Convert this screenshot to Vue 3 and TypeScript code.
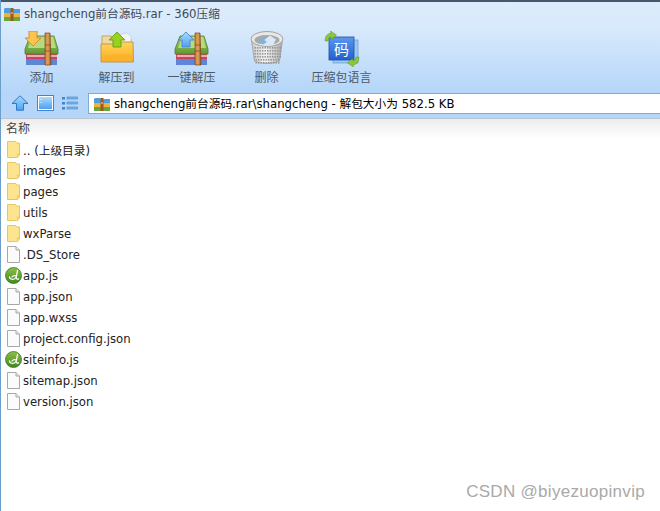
<!-- 360压缩 主窗口 -->
<script setup lang="ts">
type FileKind = 'folder' | 'doc' | 'js'

interface FileRow {
  name: string
  kind: FileKind
}

const rows: FileRow[] = [
  { name: '.. (上级目录)', kind: 'folder' },
  { name: 'images', kind: 'folder' },
  { name: 'pages', kind: 'folder' },
  { name: 'utils', kind: 'folder' },
  { name: 'wxParse', kind: 'folder' },
  { name: '.DS_Store', kind: 'doc' },
  { name: 'app.js', kind: 'js' },
  { name: 'app.json', kind: 'doc' },
  { name: 'app.wxss', kind: 'doc' },
  { name: 'project.config.json', kind: 'doc' },
  { name: 'siteinfo.js', kind: 'js' },
  { name: 'sitemap.json', kind: 'doc' },
  { name: 'version.json', kind: 'doc' },
]

const holes: { x: number; y: number }[] = []
for (let r = 0; r < 6; r++) {
  for (let c = 0; c < 11 - (r > 3 ? 1 : 0); c++) {
    holes.push({ x: 5.5 + c * 2.5 + (r > 3 ? 1 : 0), y: 16 + r * 3 })
  }
}
</script>

<template>
  <div class="win">
    <svg class="defs" width="0" height="0" aria-hidden="true">
      <defs>
        <linearGradient id="gGreen" x1="0" y1="0" x2="0" y2="1">
          <stop offset="0" stop-color="#a5cf6b" />
          <stop offset="1" stop-color="#5f9a35" />
        </linearGradient>
        <linearGradient id="gStrap" x1="0" y1="0" x2="1" y2="0">
          <stop offset="0" stop-color="#c9803a" />
          <stop offset="0.5" stop-color="#e2a25c" />
          <stop offset="1" stop-color="#9a5520" />
        </linearGradient>
        <linearGradient id="gFolder" x1="0" y1="0" x2="0" y2="1">
          <stop offset="0" stop-color="#ffd65a" />
          <stop offset="1" stop-color="#fbab1f" />
        </linearGradient>
        <linearGradient id="gBlueArrow" x1="0" y1="0" x2="0" y2="1">
          <stop offset="0" stop-color="#a8dcff" />
          <stop offset="1" stop-color="#4f9ff0" />
        </linearGradient>
        <linearGradient id="gMetal" x1="0" y1="0" x2="1" y2="0">
          <stop offset="0" stop-color="#c9c9c9" />
          <stop offset="0.45" stop-color="#f3f3f3" />
          <stop offset="1" stop-color="#a9a9a9" />
        </linearGradient>
        <linearGradient id="gCode" x1="0" y1="0" x2="0" y2="1">
          <stop offset="0" stop-color="#5c98ee" />
          <stop offset="1" stop-color="#2360cc" />
        </linearGradient>
        <linearGradient id="gJs" x1="0" y1="0" x2="0" y2="1">
          <stop offset="0" stop-color="#8cc04a" />
          <stop offset="1" stop-color="#3f8a1f" />
        </linearGradient>
        <symbol id="book" viewBox="0 0 36 34">
          <path d="M2 22h31v11H2z" fill="#3f6fc0" />
          <path d="M2 27h31v6H2z" fill="#5d86d8" />
          <path d="M2 21h31v6H2z" fill="#c9435f" />
          <path d="M3 23h30v2H3z" fill="#f0a8b4" />
          <path d="M6 4h24l4 13v5H1v-5z" fill="url(#gGreen)" stroke="#4f7f2c" stroke-width="0.8" />
          <path d="M8 5h21l3 11H4z" fill="#b6da80" />
          <path d="M21 1h5l1 32h-6z" fill="url(#gStrap)" stroke="#80451a" stroke-width="0.7" />
          <path d="M21 13h6M21 19h6" stroke="#80451a" stroke-width="0.7" />
        </symbol>
        <symbol id="arc-small" viewBox="0 0 16 14">
          <path d="M0 2l1-1h5l1 1h9v4H0z" fill="#4f9fe0" />
          <path d="M0 6h16v4H0z" fill="#f0b040" />
          <path d="M0 10h16v4H0z" fill="#68a83a" />
          <path d="M6.500 1h3v13h-3z" fill="#9a5a20" />
          <path d="M7.500 5h1v2h-1z" fill="#f3d9a0" />
        </symbol>
        <symbol id="ic-folder" viewBox="0 0 13 17">
          <path d="M.5.5h8l1 1.500h3v12l-2 2.500H.5z" fill="#fde58f" stroke="#e8c463" />
          <path d="M9.500 12.500h3l-2 4z" fill="#f2cd6b" />
        </symbol>
        <symbol id="ic-doc" viewBox="0 0 13 17">
          <path d="M.5.500h8.500l3.500 3.500v12.500H.5z" fill="#fbfbfb" stroke="#a8a8a8" />
          <path d="M9 .5v3.500h3.500" fill="#e8e8e8" stroke="#a8a8a8" />
        </symbol>
        <symbol id="ic-js" viewBox="0 0 17 17">
          <circle cx="8.500" cy="8.500" r="8" fill="url(#gJs)" stroke="#3a7a1c" stroke-width="0.800" />
          <path d="M12.500 3.500L11.500 9C11 12 8 13 6 12 5 11.500 4.500 10.500 4.500 10M7 10C8 8.500 10 8.500 11.500 9M11.200 10.500Q11.500 12.500 13.500 12" fill="none" stroke="#fff" stroke-width="1.300" stroke-linecap="round" />
        </symbol>
      </defs>
    </svg>

    <div class="titlebar">
      <svg class="title-icon" width="16" height="14"><use href="#arc-small" /></svg>
      <span class="title-text">shangcheng前台源码.rar - 360压缩</span>
    </div>

    <div class="toolbar">
      <div class="tool">
        <svg width="36" height="36" viewBox="0 0 36 36">
          <use href="#book" x="0" y="1" width="36" height="34" />
          <path d="M5 0h8v7h4l-8 8-8-8h4z" fill="#fbc44e" stroke="#d08a26" stroke-width="0.900" />
        </svg>
        <span>添加</span>
      </div>
      <div class="tool">
        <svg width="36" height="36" viewBox="0 0 36 36">
          <path d="M3 5h9l2 3h18v6H3z" fill="#efd9a0" stroke="#b99a58" stroke-width="0.800" />
          <path d="M14 5l14-3 4 3v12H14z" fill="#f4f4f4" stroke="#c8c8c8" stroke-width="0.700" />
          <path d="M2 13h12l2-2h18l.5 20H2z" fill="url(#gFolder)" stroke="#bb9a55" stroke-width="1" />
          <path d="M4 25q14-3 29-1v6H3z" fill="#fbb22b" />
          <path d="M18 1l8 8h-4v7h-8V9h-4z" fill="#9bd11e" stroke="#64a012" stroke-width="0.900" />
        </svg>
        <span>解压到</span>
      </div>
      <div class="tool">
        <svg width="36" height="36" viewBox="0 0 36 36">
          <use href="#book" x="0" y="1" width="36" height="34" />
          <path d="M12 1l8 8h-4v7H8V9H4z" fill="url(#gBlueArrow)" stroke="#4a86d0" stroke-width="0.900" />
        </svg>
        <span>一键解压</span>
      </div>
      <div class="tool">
        <svg width="36" height="36" viewBox="0 0 36 36">
          <path d="M2.500 9l3 21q12.500 5 25 0l3-21z" fill="url(#gMetal)" stroke="#9a9a9a" stroke-width="0.800" />
          <g fill="#949494">
            <rect v-for="(h, i) in holes" :key="i" :x="h.x" :y="h.y" width="1.400" height="1.600" />
          </g>
          <ellipse cx="18" cy="8" rx="16" ry="7.500" fill="#e8e8e8" stroke="#a2a2a2" />
          <ellipse cx="18" cy="9" rx="12.500" ry="5" fill="#a4a9ad" />
          <path d="M12 11.500l9-7 6 4-3 5.500q-6 1-12-.5z" fill="#dbe9f6" />
          <path d="M9 11l5-3 4 3-4 2.500z" fill="#7fb3de" />
        </svg>
        <span>删除</span>
      </div>
      <div class="tool">
        <svg width="36" height="36" viewBox="0 0 36 36">
          <rect x="9" y="9" width="25" height="23" fill="#9cc8f2" stroke="#6fa3db" stroke-width="0.800" />
          <rect x="5" y="6" width="25" height="23" fill="url(#gCode)" stroke="#1c4fa8" stroke-width="0.800" />
          <path d="M1 10q0-7 6-8l-.5-2 6 4-5 4.500-.5-2.500q-3 .5-3 4z" fill="#8cc63a" stroke="#5d9a1c" stroke-width="0.500" />
          <path d="M35 26q0 7-6 8l.5 2-6-4 5-4.500.5 2.500q3-.5 3-4z" fill="#8cc63a" stroke="#5d9a1c" stroke-width="0.500" />
          <text x="17.500" y="23.500" text-anchor="middle" class="code-glyph">码</text>
        </svg>
        <span>压缩包语言</span>
      </div>
    </div>

    <div class="navbar">
      <div class="nav-icons">
        <svg width="18" height="16" viewBox="0 0 18 16">
          <path d="M9 .8l8 7.700h-4.500v6.700h-7V8.500H1z" fill="url(#gBlueArrow)" stroke="#2f78c8" />
        </svg>
        <svg width="17" height="16" viewBox="0 0 17 16">
          <rect x=".5" y=".5" width="16" height="15" fill="#fff" stroke="#3f86cc" />
          <rect x="2" y="2" width="13" height="12" fill="url(#gBlueArrow)" />
          <path d="M3.500 4h1v1h-1zM3.500 7h1v1h-1z" fill="#fff" />
        </svg>
        <svg width="16" height="14" viewBox="0 0 16 14">
          <g fill="#3f86cc">
            <rect x="0" y="1" width="3" height="2.500" />
            <rect x="0" y="6" width="3" height="2.500" />
            <rect x="0" y="11" width="3" height="2.500" />
          </g>
          <g fill="#7db6ea" stroke="#3f86cc" stroke-width="0.600">
            <rect x="5" y="1" width="10.500" height="2" />
            <rect x="5" y="6" width="10.500" height="2" />
            <rect x="5" y="11" width="10.500" height="2" />
          </g>
        </svg>
      </div>
      <div class="address">
        <svg width="16" height="14"><use href="#arc-small" /></svg>
        <span class="address-text">shangcheng前台源码.rar\shangcheng - 解包大小为 582.5 KB</span>
      </div>
    </div>

    <div class="list-head">名称</div>

    <ul class="list">
      <li v-for="row in rows" :key="row.name" class="row">
        <span class="row-icon">
          <svg v-if="row.kind === 'folder'" width="13" height="17"><use href="#ic-folder" /></svg>
          <svg v-else-if="row.kind === 'doc'" width="13" height="17"><use href="#ic-doc" /></svg>
          <svg v-else width="17" height="17"><use href="#ic-js" /></svg>
        </span>
        <span>{{ row.name }}</span>
      </li>
    </ul>

    <div class="watermark">CSDN @biyezuopinvip</div>
  </div>
</template>

<style>
html,
body {
  margin: 0;
  background: #fff;
}
</style>

<style scoped>
.win {
  position: relative;
  width: 660px;
  height: 511px;
  overflow: hidden;
  box-sizing: border-box;
  border-left: 1px solid #6d9dc9;
  background: #fff;
  color: #1a1a1a;
  font-family: "DejaVu Sans", "Noto Sans CJK SC", sans-serif;
  font-size: 11.700px;
}

.defs {
  position: absolute;
}

.titlebar {
  display: flex;
  align-items: center;
  height: 26px;
  box-sizing: border-box;
  padding: 0 0 0 3px;
  gap: 4px;
  border-top: 2px solid #46586e;
  background: linear-gradient(#dcecfd, #d9eafc);
  color: #3d4a58;
  font-size: 11.700px;
}

.title-text {
  margin-top: -4px;
}

.toolbar {
  display: flex;
  height: 66px;
  padding-left: 3px;
  background: linear-gradient(#d9eafc, #b5d6f9);
}

.tool {
  width: 75px;
  display: flex;
  flex-direction: column;
  align-items: center;
  padding-top: 5px;
  box-sizing: border-box;
  color: #4c5966;
  font-size: 12px;
}

.tool span {
  margin-top: 3px;
  line-height: 16px;
}

.code-glyph {
  fill: #fff;
  font-family: "Noto Sans CJK SC", sans-serif;
  font-size: 15px;
}

.navbar {
  display: flex;
  align-items: stretch;
  height: 27px;
  box-sizing: border-box;
  padding-top: 1px;
  background: #b5d6f9;
  border-bottom: 1px solid #b9c4d0;
}

.nav-icons {
  display: flex;
  align-items: center;
  width: 87px;
  box-sizing: border-box;
  padding: 0 0 5px 10px;
  gap: 8px;
}

.address {
  flex: 1;
  height: 21px;
  box-sizing: border-box;
  display: flex;
  align-items: center;
  gap: 4px;
  padding-left: 5px;
  background: #fff;
  border-top: 1px solid #82a9d0;
  border-bottom: 1px solid #82a9d0;
  border-left: 1px solid #82a9d0;
  color: #000;
}

.address-text {
  margin-top: -2px;
}

.list-head {
  height: 20px;
  box-sizing: border-box;
  padding: 2px 0 0 5px;
  line-height: 17px;
  background: linear-gradient(#ececec, #fff);
  color: #444;
  font-size: 12px;
}

.list {
  margin: 0;
  padding: 0;
  list-style: none;
}

.row {
  display: flex;
  align-items: center;
  height: 21px;
  color: #222;
}

.row-icon {
  display: flex;
  justify-content: center;
  width: 24px;
  flex: none;
  margin-right: -2px;
}

.watermark {
  position: absolute;
  right: 15px;
  top: 482px;
  font-family: "Liberation Sans", sans-serif;
  font-size: 17px;
  color: #a9a9a9;
  letter-spacing: 0.300px;
}
</style>
